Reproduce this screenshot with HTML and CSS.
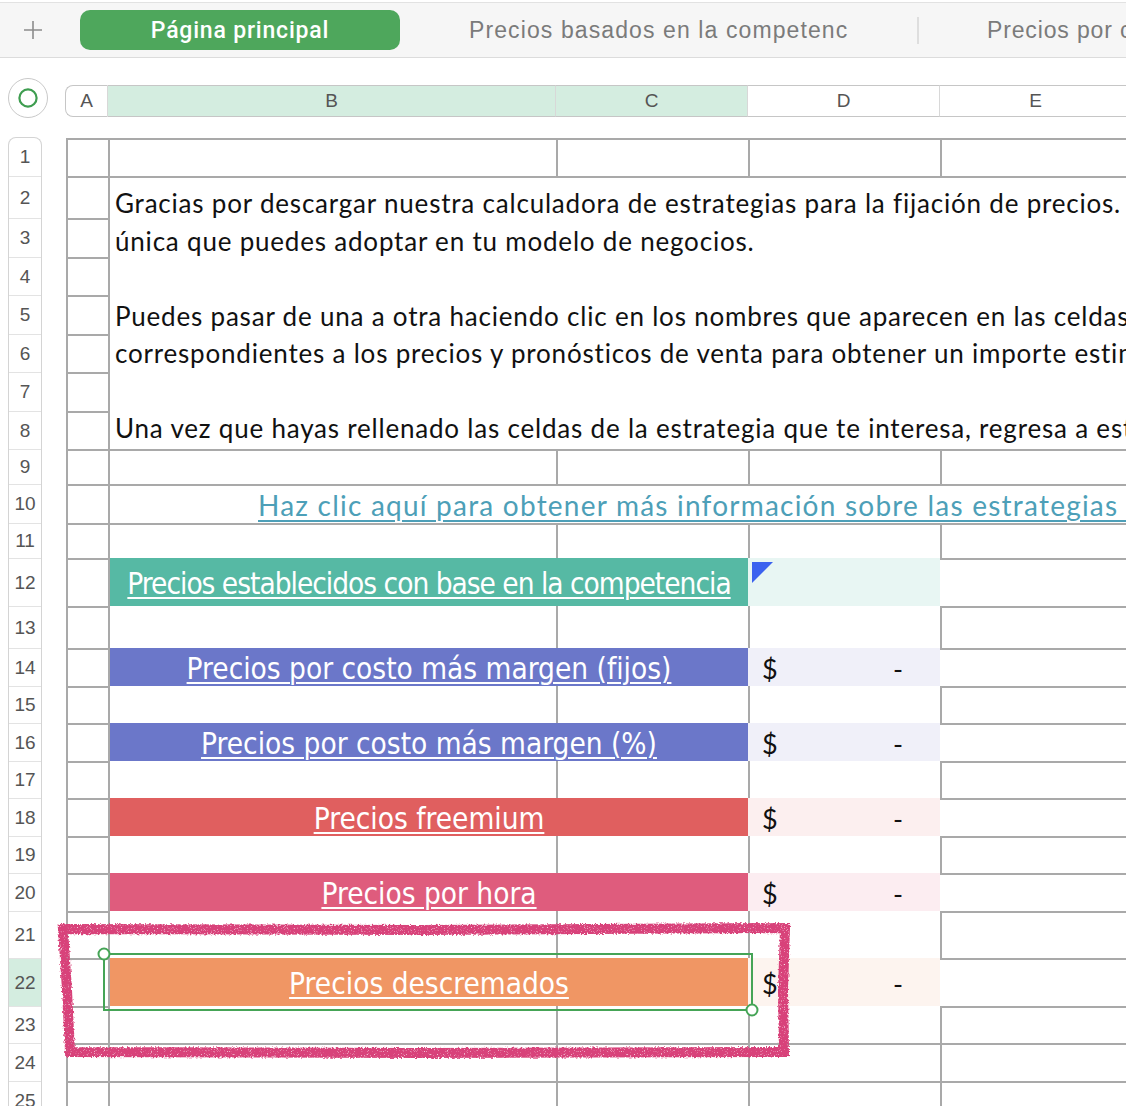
FILE: index.html
```html
<!DOCTYPE html>
<html lang="es">
<head>
<meta charset="utf-8">
<title>Calculadora de estrategias de precios</title>
<link rel="stylesheet" href="styles.css">
</head>
<body>
<div class="tabbar">
  <div class="tab-add"><svg width="18" height="18" viewBox="0 0 18 18"><path d="M9 0v18M0 9h18" stroke="#8c8c8c" stroke-width="1.6" fill="none"/></svg></div>
  <div class="tab active">Página principal</div>
  <div class="tab mid"><span>Precios basados en la competenc</span></div>
  <div class="tab-sep"></div>
  <div class="tab last">Precios por costo más margen (fijos)</div>
</div>

<div class="sheet">
  <div class="corner">
    <div class="corner-btn"><svg width="22" height="22" viewBox="0 0 22 22"><circle cx="11" cy="11" r="8.6" fill="none" stroke="#3e9d50" stroke-width="2.2"/></svg></div>
  </div>
  <div class="colheads">
    <div class="ch ch-a">A</div>
    <div class="ch ch-b sel">B</div>
    <div class="ch ch-c sel">C</div>
    <div class="ch ch-d">D</div>
    <div class="ch ch-e">E</div>
  </div>

  <div class="gutter">
    <div class="rn">1</div><div class="rn">2</div><div class="rn">3</div><div class="rn">4</div><div class="rn">5</div>
    <div class="rn">6</div><div class="rn">7</div><div class="rn">8</div><div class="rn">9</div><div class="rn">10</div>
    <div class="rn">11</div><div class="rn">12</div><div class="rn">13</div><div class="rn">14</div><div class="rn">15</div>
    <div class="rn">16</div><div class="rn">17</div><div class="rn">18</div><div class="rn">19</div><div class="rn">20</div>
    <div class="rn">21</div><div class="rn sel">22</div><div class="rn">23</div><div class="rn">24</div><div class="rn">25</div>
  </div>

  <div class="table">
    <!-- row 1 -->
    <div class="c t l"></div><div class="c t l"></div><div class="c t l"></div><div class="c t l"></div><div class="c t l"></div>
    <!-- rows 2-8 -->
    <div class="c t l"></div>
    <div class="c t l intro">Gracias por descargar nuestra calculadora de estrategias para la fijación de precios. Esta herramienta te permite comparar<br>única que puedes adoptar en tu modelo de negocios.<br><br>Puedes pasar de una a otra haciendo clic en los nombres que aparecen en las celdas de colores y rellenar<br>correspondientes a los precios y pronósticos de venta para obtener un importe estimado.<br><br>Una vez que hayas rellenado las celdas de la estrategia que te interesa, regresa a esta página.</div>
    <div class="c t l"></div>
    <div class="c t l"></div>
    <div class="c t l"></div>
    <div class="c t l"></div>
    <div class="c t l"></div>
    <div class="c t l"></div>
    <!-- row 9 -->
    <div class="c t l"></div><div class="c t l"></div><div class="c t l"></div><div class="c t l"></div><div class="c t l"></div>
    <!-- row 10 -->
    <div class="c t l"></div>
    <div class="c t l link"><span>Haz clic aquí para obtener más información sobre las estrategias de precios</span></div>
    <!-- row 11 -->
    <div class="c t l"></div><div class="c t l"></div><div class="c t l"></div><div class="c t l"></div><div class="c t l"></div>
    <!-- row 12 -->
    <div class="c t l"></div>
    <div class="c l band teal tight"><span>Precios establecidos con base en la competencia</span></div>
    <div class="c amt amt-teal"></div>
    <div class="c t"></div>
    <!-- row 13 -->
    <div class="c t l"></div><div class="c l"></div><div class="c l"></div><div class="c l"></div><div class="c t l"></div>
    <!-- row 14 -->
    <div class="c t l"></div>
    <div class="c l band blue"><span>Precios por costo más margen (fijos)</span></div>
    <div class="c amt amt-blue"><span>$</span><span>-</span></div>
    <div class="c t"></div>
    <!-- row 15 -->
    <div class="c t l"></div><div class="c l"></div><div class="c l"></div><div class="c l"></div><div class="c t l"></div>
    <!-- row 16 -->
    <div class="c t l"></div>
    <div class="c l band blue"><span>Precios por costo más margen (%)</span></div>
    <div class="c amt amt-blue"><span>$</span><span>-</span></div>
    <div class="c t"></div>
    <!-- row 17 -->
    <div class="c t l"></div><div class="c l"></div><div class="c l"></div><div class="c l"></div><div class="c t l"></div>
    <!-- row 18 -->
    <div class="c t l"></div>
    <div class="c l band red"><span>Precios freemium</span></div>
    <div class="c amt amt-red"><span>$</span><span>-</span></div>
    <div class="c t"></div>
    <!-- row 19 -->
    <div class="c t l"></div><div class="c l"></div><div class="c l"></div><div class="c l"></div><div class="c t l"></div>
    <!-- row 20 -->
    <div class="c t l"></div>
    <div class="c l band pink"><span>Precios por hora</span></div>
    <div class="c amt amt-pink"><span>$</span><span>-</span></div>
    <div class="c t"></div>
    <!-- row 21 -->
    <div class="c t l"></div><div class="c l"></div><div class="c l"></div><div class="c l"></div><div class="c t l"></div>
    <!-- row 22 -->
    <div class="c t l"></div>
    <div class="c l band orange"><span>Precios descremados</span></div>
    <div class="c amt amt-orange"><span>$</span><span>-</span></div>
    <div class="c t"></div>
    <!-- row 23 -->
    <div class="c t l"></div><div class="c l"></div><div class="c l"></div><div class="c l"></div><div class="c t l"></div>
    <!-- row 24 -->
    <div class="c t l"></div><div class="c t l"></div><div class="c t l"></div><div class="c t l"></div><div class="c t l"></div>
    <!-- row 25 -->
    <div class="c t l"></div><div class="c t l"></div><div class="c t l"></div><div class="c t l"></div><div class="c t l"></div>
  </div>
</div>

<svg class="overlay" width="1126" height="1106" viewBox="0 0 1126 1106">
  <defs>
    <filter id="crayon" x="-5%" y="-20%" width="110%" height="140%">
      <feTurbulence type="fractalNoise" baseFrequency="0.55" numOctaves="2" seed="3" result="n"/>
      <feDisplacementMap in="SourceGraphic" in2="n" scale="4" xChannelSelector="R" yChannelSelector="G" result="d"/>
      <feTurbulence type="fractalNoise" baseFrequency="1.3" numOctaves="1" seed="9" result="n2"/>
      <feColorMatrix in="n2" type="matrix" values="0 0 0 0 0  0 0 0 0 0  0 0 0 0 0  -4 0 0 0 3.4" result="speck"/>
      <feComposite in="d" in2="speck" operator="in"/>
    </filter>
  </defs>
  <rect x="104" y="954" width="648" height="56" fill="none" stroke="#45a456" stroke-width="2"/>
  <circle cx="104" cy="954" r="5.5" fill="#fff" stroke="#45a456" stroke-width="2"/>
  <circle cx="752" cy="1010" r="5.5" fill="#fff" stroke="#45a456" stroke-width="2"/>
  <path d="M63 929 L420 930 L785 928 L783 990 L784 1052 L420 1053 L70 1052 L67 990 Z" fill="none" stroke="#d8437a" stroke-width="10" stroke-linejoin="miter" filter="url(#crayon)"/>
</svg>
</body>
</html>
```

FILE: styles.css
```css
* { box-sizing: border-box; }
html, body { margin: 0; padding: 0; }
body {
  width: 1126px;
  height: 1106px;
  overflow: hidden;
  background: #fff;
  position: relative;
  font-family: "Liberation Sans", Arial, sans-serif;
}

/* tab bar */
.tabbar {
  margin-top: 2px;
  height: 56px;
  background: #f6f6f6;
  border-top: 1px solid #e2e2e2;
  border-bottom: 1px solid #dcdcdc;
  display: flex;
  align-items: center;
  white-space: nowrap;
  overflow: hidden;
}
.tab-add {
  flex: none;
  width: 80px;
  padding-left: 24px;
  display: flex;
  align-items: center;
}
.tab {
  flex: none;
  font-size: 23px;
  letter-spacing: 0.85px;
  color: #7b7b7b;
}
.tab.active {
  width: 320px;
  height: 40px;
  border-radius: 10px;
  background: #4ea75c;
  color: #fff;
  display: flex;
  align-items: center;
  justify-content: center;
  font-family: Roboto, "Liberation Sans", sans-serif;
  font-weight: 500;
  letter-spacing: 0.8px;
}
.tab.mid {
  width: 517px;
  padding-left: 69px;
  display: flex;
  letter-spacing: 1.1px;
}
.tab.mid span {
  display: block;
}
.tab-sep {
  flex: none;
  width: 2px;
  height: 27px;
  background: #dedede;
}
.tab.last { padding-left: 68px; }

/* sheet */
.sheet {
  display: grid;
  grid-template-columns: 65px auto;
  grid-template-rows: 40px auto;
  row-gap: 20px;
  padding-top: 20px;
}
.corner { padding-left: 8px; }
.corner-btn {
  width: 40px;
  height: 40px;
  border-radius: 50%;
  border: 1px solid #c9c9c9;
  background: #fff;
  display: flex;
  align-items: center;
  justify-content: center;
}
.colheads {
  display: flex;
  margin-top: 7px;
  height: 32px;
}
.ch {
  flex: none;
  height: 32px;
  border-top: 1px solid #c6c6c6;
  border-bottom: 1px solid #c6c6c6;
  border-right: 1px solid #d8d8d8;
  display: flex;
  align-items: center;
  justify-content: center;
  font-size: 19px;
  color: #555;
  background: #fff;
}
.ch-a {
  width: 43px;
  border-left: 1px solid #c6c6c6;
  border-radius: 8px 0 0 8px;
}
.ch-b { width: 448px; }
.ch-c { width: 192px; }
.ch-d { width: 192px; }
.ch-e { width: 192px; }
.ch.sel { background: #d4ede0; }

.gutter,
.table {
  grid-template-rows: 38px 42px 39px 38px 39px 38px 39px 38px 35px 39px 35px 48px 42px 38px 37px 38px 37px 38px 37px 38px 47px 48px 37px 38px 38px;
}
.gutter {
  margin: -1px 0 0 8px;
  width: 34px;
  border: 1px solid #d4d4d4;
  border-bottom: none;
  border-radius: 8px 8px 0 0;
  display: grid;
}
.rn {
  display: flex;
  align-items: center;
  justify-content: center;
  font-size: 19px;
  color: #555;
  border-top: 1px solid #e3e3e3;
}
.rn:first-child { border-top: none; }
.rn.sel { background: #d4ede0; }

/* grid table */
.table {
  margin-left: 1px;
  display: grid;
  grid-template-columns: 42px 448px 192px 192px 200px;
}
.c { min-width: 0; }
.t { border-top: 2px solid #a9a9a9; }
.l { border-left: 2px solid #a9a9a9; }

.intro {
  grid-column: span 4;
  grid-row: span 7;
  padding: 7px 0 0 5px;
  font-family: Lato, "Liberation Sans", sans-serif;
  font-size: 26px;
  letter-spacing: 0.8px;
  line-height: 37.5px;
  color: #111;
  white-space: nowrap;
  overflow: hidden;
}
.link {
  grid-column: span 4;
  display: flex;
  align-items: center;
  padding-left: 148px;
  font-family: Lato, "Liberation Sans", sans-serif;
  font-size: 28px;
  letter-spacing: 1.22px;
  color: #4d9fb8;
  white-space: nowrap;
  overflow: hidden;
}
.link span {
  text-decoration: underline;
  text-decoration-thickness: 1.5px;
  text-underline-offset: 4px;
}
.band {
  grid-column: span 2;
  display: flex;
  align-items: center;
  justify-content: center;
  padding-top: 4px;
  color: #fff;
  font-family: "DejaVu Sans Condensed", "DejaVu Sans", sans-serif;
  font-stretch: condensed;
  font-size: 29.5px;
  white-space: nowrap;
  overflow: hidden;
}
.band.tight { letter-spacing: -1px; }
.band span {
  text-decoration: underline;
  text-decoration-thickness: 2px;
  text-underline-offset: 3px;
}
.teal { background: #56b9a4; }
.blue { background: #6b77c9; }
.red { background: #e05f5f; }
.pink { background: #df5c7d; }
.orange { background: #f09664; }

.amt {
  display: flex;
  align-items: center;
  justify-content: space-between;
  padding: 2px 37px 0 14px;
  font-family: Lato, "Liberation Sans", sans-serif;
  font-size: 27px;
  color: #111;
}
.amt-teal { background: #e8f6f3; position: relative; }
.amt-teal::before {
  content: "";
  position: absolute;
  top: 4px;
  left: 4px;
  width: 0;
  height: 0;
  border-top: 21px solid #3b62ef;
  border-right: 21px solid transparent;
}
.amt-blue { background: #f0f0f9; }
.amt-red { background: #fcefef; }
.amt-pink { background: #fcedf1; }
.amt-orange { background: #fdf4ef; }

.overlay {
  position: absolute;
  left: 0;
  top: 0;
  pointer-events: none;
}
```
